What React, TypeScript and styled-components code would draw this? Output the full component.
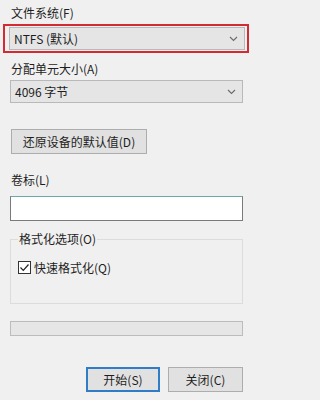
import React from "react";
import styled, { createGlobalStyle } from "styled-components";

const Global = createGlobalStyle`
  html, body { margin: 0; padding: 0; background: #f0f0f0; }
  body { font-family: "Noto Sans CJK SC", "Noto Sans", sans-serif; font-size: 12px; color: #1e1e1e; }
`;

const Page = styled.div`
  width: 254px;
  height: 400px;
  box-sizing: border-box;
  padding: 5px 11px 0 10px;
  display: flex;
  flex-direction: column;
  background: #f0f0f0;
`;

const Label = styled.div<{ $mt?: number }>`
  height: 16px;
  line-height: 16px;
  font-size: 12px;
  padding-left: 1px;
  margin-top: ${(p) => p.$mt ?? 0}px;
`;

const Highlight = styled.div`
  margin: 3px -6px 0 -7px;
  border: 2px solid #d42a33;
  padding: 1px 2px 1px 4px;
`;

const Combo = styled.div<{ $mt?: number }>`
  height: 23px;
  box-sizing: border-box;
  border: 1px solid #b9b9b9;
  background: #e5e5e5;
  display: flex;
  align-items: center;
  justify-content: space-between;
  padding: 0 6px 0 4px;
  margin-top: ${(p) => p.$mt ?? 0}px;
  font-size: 12px;
`;

const Chevron = () => (
  <svg width="9" height="6" viewBox="0 0 9 6">
    <path d="M1 1 L4.5 4.5 L8 1" fill="none" stroke="#6b6b6b" strokeWidth="1.1" />
  </svg>
);

const Button = styled.div<{ $default?: boolean; $w: number }>`
  width: ${(p) => p.$w}px;
  height: 25px;
  box-sizing: border-box;
  border: ${(p) => (p.$default ? "2px solid #2f7dc6" : "1px solid #adadad")};
  background: #e1e1e1;
  display: flex;
  align-items: center;
  justify-content: center;
  font-size: 12px;
`;

const ResetRow = styled.div`
  margin-top: 26px;
  padding-left: 1px;
`;

const TextBox = styled.div`
  margin-top: 8px;
  height: 25px;
  box-sizing: border-box;
  background: #ffffff;
  border: 1px solid #7a7a7a;
  border-top-color: #6aa6aa;
`;

const Group = styled.fieldset`
  margin: 11px 0 0 0;
  height: 72px;
  box-sizing: border-box;
  border: 1px solid #dcdcdc;
  padding: 13px 7px 0 7px;
  min-width: 0;
`;

const Legend = styled.legend`
  padding: 0 1px;
  margin-left: 0;
  font-size: 12px;
  line-height: 14px;
`;

const CheckRow = styled.label`
  display: flex;
  align-items: center;
  gap: 3px;
  height: 16px;
  font-size: 12px;
`;

const Box = styled.span`
  width: 13px;
  height: 13px;
  box-sizing: border-box;
  border: 1px solid #333333;
  background: #ffffff;
  display: flex;
  align-items: center;
  justify-content: center;
`;

const Progress = styled.div`
  margin-top: 17px;
  height: 15px;
  box-sizing: border-box;
  border: 1px solid #bcbcbc;
  background: #e6e6e6;
`;

const Footer = styled.div`
  margin-top: 31px;
  display: flex;
  justify-content: flex-end;
  gap: 8px;
`;

export default function App() {
  return (
    <>
      <Global />
      <Page>
        <Label>文件系统(F)</Label>
        <Highlight>
          <Combo>
            <span>NTFS (默认)</span>
            <Chevron />
          </Combo>
        </Highlight>
        <Label $mt={8}>分配单元大小(A)</Label>
        <Combo $mt={3}>
          <span>4096 字节</span>
          <Chevron />
        </Combo>
        <ResetRow>
          <Button $w={136}>还原设备的默认值(D)</Button>
        </ResetRow>
        <Label $mt={18}>卷标(L)</Label>
        <TextBox />
        <Group>
          <Legend>格式化选项(O)</Legend>
          <CheckRow>
            <Box>
              <svg width="11" height="11" viewBox="0 0 11 11">
                <path d="M1.5 5.5 L4.3 8.3 L9.5 2.5" fill="none" stroke="#222" strokeWidth="1.2" />
              </svg>
            </Box>
            快速格式化(Q)
          </CheckRow>
        </Group>
        <Progress />
        <Footer>
          <Button $default $w={74}>开始(S)</Button>
          <Button $w={75}>关闭(C)</Button>
        </Footer>
      </Page>
    </>
  );
}
